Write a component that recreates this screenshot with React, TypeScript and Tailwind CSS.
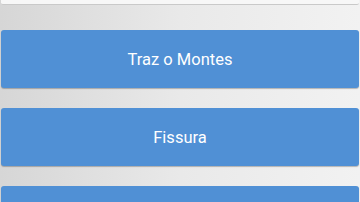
import React from "react";

const places = ["Traz o Montes", "Fissura", ""];

const App: React.FC = () => {
  return (
    <div className="w-[360px] h-[202px] overflow-hidden bg-gradient-to-r from-[#d6d6d6] via-[#e9e9e9] to-[#f2f2f2] font-['Roboto',sans-serif]">
      <div className="h-[5px] bg-[#f7f7f7] border-b border-[#c9c9c9] mx-[1px] rounded-b-[2px]" />
      <div className="flex flex-col gap-[20px] pt-[25px] px-[1px]">
        {places.map((p, i) => (
          <button
            key={i}
            className="h-[58px] w-full shrink-0 rounded-[3px] bg-[#5090d5] text-white text-[16.5px] pt-[3px] shadow-[0_1px_1px_rgba(0,0,0,0.25)] flex items-center justify-center"
          >
            {p}
          </button>
        ))}
      </div>
    </div>
  );
};

export default App;
